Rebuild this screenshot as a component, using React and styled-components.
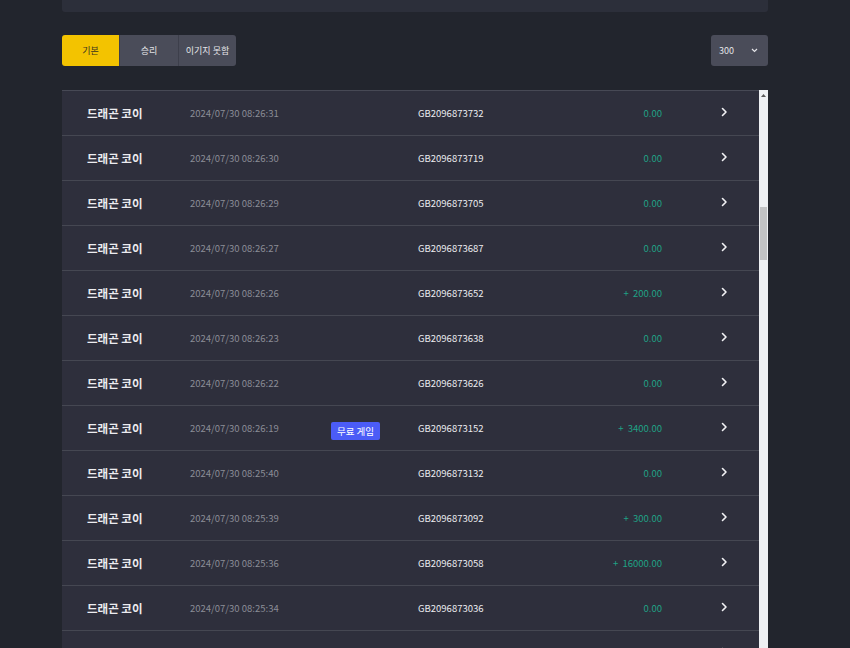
import React from "react";
import styled, { createGlobalStyle } from "styled-components";

const GlobalStyle = createGlobalStyle`
  html, body {
    margin: 0;
    padding: 0;
    background: #22252d;
    overflow: hidden;
    font-family: "Noto Sans CJK KR", "Noto Sans", sans-serif;
  }
`;

const rows = [
  ["08:26:31", "GB2096873732", "0.00"],
  ["08:26:30", "GB2096873719", "0.00"],
  ["08:26:29", "GB2096873705", "0.00"],
  ["08:26:27", "GB2096873687", "0.00"],
  ["08:26:26", "GB2096873652", "+ 200.00"],
  ["08:26:23", "GB2096873638", "0.00"],
  ["08:26:22", "GB2096873626", "0.00"],
  ["08:26:19", "GB2096873152", "+ 3400.00", true],
  ["08:25:40", "GB2096873132", "0.00"],
  ["08:25:39", "GB2096873092", "+ 300.00"],
  ["08:25:36", "GB2096873058", "+ 16000.00"],
  ["08:25:34", "GB2096873036", "0.00"],
  ["08:25:31", "GB2096873011", "0.00"],
];

const Page = styled.div`
  width: 706px;
  margin-left: 62px;
`;

const TopPanel = styled.div`
  height: 12px;
  background: #2c2f3a;
  border-radius: 0 0 3px 3px;
`;

const Toolbar = styled.div`
  display: flex;
  justify-content: space-between;
  align-items: center;
  margin-top: 23px;
  height: 31px;
`;

const Tabs = styled.div`
  display: flex;
  border-radius: 3px;
  overflow: hidden;
`;

const Tab = styled.button`
  width: ${(p) => p.$w}px;
  height: 31px;
  border: none;
  border-left: ${(p) => (p.$first ? "none" : "1px solid #3d3f4b")};
  background: ${(p) => (p.$active ? "#f3c300" : "#4a4c59")};
  color: ${(p) => (p.$active ? "#3a3320" : "#e4e4e8")};
  font-family: inherit;
  font-size: 9px;
  padding: 0;
  cursor: pointer;
`;

const Select = styled.div`
  width: 57px;
  height: 31px;
  box-sizing: border-box;
  padding: 0 10px 0 8px;
  display: flex;
  align-items: center;
  justify-content: space-between;
  background: #4a4c59;
  border-radius: 3px;
  color: #e4e4e8;
  font-size: 9px;
`;

const ListWrap = styled.div`
  margin-top: 24px;
  height: 558px;
  overflow: hidden;
  display: flex;
  align-items: stretch;
`;

const Rows = styled.div`
  flex: 1;
  border-top: 1px solid #474955;
`;

const ScrollTrack = styled.div`
  width: 9px;
  flex: none;
  background: #eef0f3;
  display: flex;
  flex-direction: column;
  align-items: center;
`;

const ScrollUp = styled.div`
  height: 10px;
  display: flex;
  align-items: center;
  justify-content: center;
`;

const Thumb = styled.div`
  margin-top: 107px;
  width: 7px;
  height: 53px;
  background: #c2c3c5;
`;

const Row = styled.div`
  display: grid;
  grid-template-columns: 103px 141px 87px 140px 104px 1fr;
  align-items: center;
  height: 45px;
  box-sizing: border-box;
  padding-left: 25px;
  background: #2e2f3c;
  border-bottom: 1px solid #454752;
`;

const Name = styled.span`
  font-size: 11.5px;
  font-weight: 700;
  color: #ececf0;
`;

const Time = styled.span`
  font-size: 9.5px;
  color: #8b8d97;
`;

const Badge = styled.span`
  display: inline-block;
  background: #4b5cf6;
  color: #fff;
  font-size: 9.5px;
  border-radius: 2px;
  padding: 2px 6px;
  line-height: 14px;
`;

const Id = styled.span`
  font-size: 9.5px;
  color: #ececf0;
`;

const Amount = styled.span`
  font-size: 9.5px;
  color: #1fa386;
  text-align: right;
  word-spacing: 2px;
`;

const Arrow = styled.span`
  margin-left: 57px;
  margin-top: -2px;
  display: flex;
  color: #f2f2f5;
`;

const Chevron = () => (
  <svg width="10" height="10" viewBox="0 0 10 10" fill="none">
    <path d="M3.5 1.5 L7 5 L3.5 8.5" stroke="currentColor" strokeWidth="1.6" strokeLinecap="round" strokeLinejoin="round" />
  </svg>
);

const SmallDown = () => (
  <svg width="7" height="5" viewBox="0 0 7 5" fill="none">
    <path d="M1 1 L3.5 3.5 L6 1" stroke="#e4e4e8" strokeWidth="1.2" />
  </svg>
);

const UpTriangle = () => (
  <svg width="5" height="3" viewBox="0 0 5 3">
    <path d="M0 3 L2.5 0 L5 3 Z" fill="#5a5a5a" />
  </svg>
);

export default function App() {
  return (
    <>
      <GlobalStyle />
      <Page>
        <TopPanel />
        <Toolbar>
          <Tabs>
            <Tab $w={57} $active $first>
              기본
            </Tab>
            <Tab $w={59}>승리</Tab>
            <Tab $w={58}>이기지 못함</Tab>
          </Tabs>
          <Select>
            <span>300</span>
            <SmallDown />
          </Select>
        </Toolbar>
        <ListWrap>
          <Rows>
            {rows.map(([time, id, amount, free]) => (
              <Row key={id}>
                <Name>드래곤 코이</Name>
                <Time>2024/07/30 {time}</Time>
                <span>{free && <Badge>무료 게임</Badge>}</span>
                <Id>{id}</Id>
                <Amount>{amount}</Amount>
                <Arrow>
                  <Chevron />
                </Arrow>
              </Row>
            ))}
          </Rows>
          <ScrollTrack>
            <ScrollUp>
              <UpTriangle />
            </ScrollUp>
            <Thumb />
          </ScrollTrack>
        </ListWrap>
      </Page>
    </>
  );
}
